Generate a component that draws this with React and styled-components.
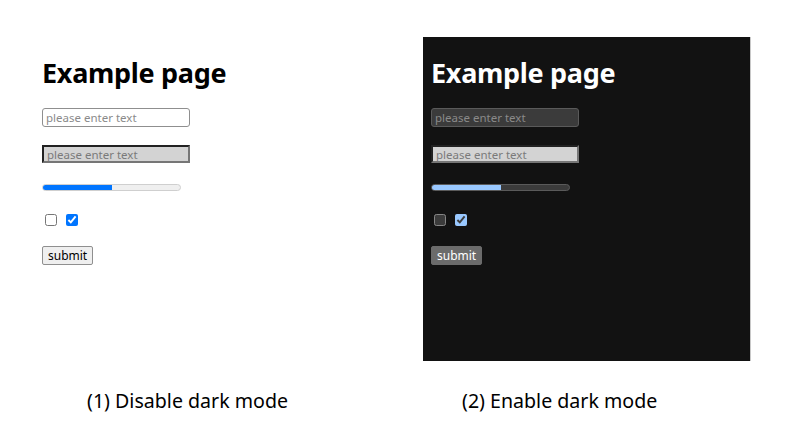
import React from 'react';
import styled, { createGlobalStyle, css } from 'styled-components';

const GlobalStyle = createGlobalStyle`
  html, body {
    margin: 0;
    padding: 0;
    background: #ffffff;
    font-family: "Noto Sans", "Open Sans", sans-serif;
  }
`;

const Page = styled.div`
  width: 792px;
  height: 435px;
  padding: 37px 0 0 34px;
  box-sizing: border-box;
  display: grid;
  grid-template-columns: 328px 328px;
  grid-template-rows: 324px auto;
  column-gap: 61px;
`;

const Panel = styled.div`
  box-sizing: border-box;
  padding: 19px 8px 0 8px;
  display: flex;
  flex-direction: column;
  align-items: flex-start;
  color-scheme: ${p => (p.$dark ? 'dark' : 'light')};
  background: ${p => (p.$dark ? '#121212' : '#ffffff')};
  color: ${p => (p.$dark ? '#ffffff' : '#000000')};
  border-right: ${p => (p.$dark ? '1px solid #c8c8c8' : 'none')};
`;

const Heading = styled.h1`
  margin: 0;
  font-size: 27px;
  line-height: 34px;
  font-weight: 700;
  letter-spacing: -0.3px;
`;

const fieldBase = css`
  box-sizing: border-box;
  width: 148px;
  height: 19px;
  padding: 0 3px;
  font-family: inherit;
  font-size: 11.5px;
  outline: none;
`;

const TextField = styled.input`
  ${fieldBase}
  margin-top: 18px;
  border-radius: 3px;
  border: 1px solid ${p => (p.$dark ? '#5a5a5a' : '#8f8f8f')};
  background: ${p => (p.$dark ? '#3b3b3b' : '#ffffff')};
  &::placeholder {
    color: #8a8a8a;
  }
`;

const InsetField = styled.input`
  ${fieldBase}
  margin-top: 18px;
  height: 18px;
  border: 2px inset #767676;
  border-radius: 0;
  background: #d3d3d3;
  &::placeholder {
    color: #7a7a7a;
  }
`;

const Track = styled.div`
  margin-top: 21px;
  width: 139px;
  height: 7px;
  box-sizing: border-box;
  border-radius: 4px;
  overflow: hidden;
  border: 1px solid ${p => (p.$dark ? '#5a5a5a' : '#cfcfcf')};
  background: ${p => (p.$dark ? '#3b3b3b' : '#efefef')};
`;

const Fill = styled.div`
  height: 100%;
  width: ${p => p.$value}%;
  background: ${p => (p.$dark ? '#99c8ff' : '#0075ff')};
`;

const CheckRow = styled.div`
  margin-top: 23px;
  display: flex;
  gap: 9px;
  padding-left: 3px;
`;

const Check = styled.input.attrs({ type: 'checkbox' })`
  margin: 0;
  width: 12px;
  height: 12px;
`;

const Button = styled.button`
  margin-top: 20px;
  height: 19px;
  padding: 0 5px;
  font-family: inherit;
  font-size: 12px;
  line-height: 1;
  border-radius: 2px;
  border: 1px solid ${p => (p.$dark ? '#6b6b6b' : '#8f8f8f')};
  background: ${p => (p.$dark ? '#6b6b6b' : '#efefef')};
  color: ${p => (p.$dark ? '#ffffff' : '#000000')};
`;

const Caption = styled.div`
  padding-left: ${p => p.$indent}px;
  padding-top: 29px;
  font-size: 19.6px;
  line-height: 22px;
  color: #000000;
`;

const Demo = ({ dark }) => (
  <Panel $dark={dark}>
    <Heading>Example page</Heading>
    <TextField $dark={dark} placeholder="please enter text" />
    <InsetField placeholder="please enter text" />
    <Track $dark={dark}>
      <Fill $dark={dark} $value={50} />
    </Track>
    <CheckRow>
      <Check />
      <Check defaultChecked />
    </CheckRow>
    <Button $dark={dark}>submit</Button>
  </Panel>
);

export default function App() {
  return (
    <>
      <GlobalStyle />
      <Page>
        <Demo dark={false} />
        <Demo dark />
        <Caption $indent={53}>(1) Disable dark mode</Caption>
        <Caption $indent={39}>(2) Enable dark mode</Caption>
      </Page>
    </>
  );
}
